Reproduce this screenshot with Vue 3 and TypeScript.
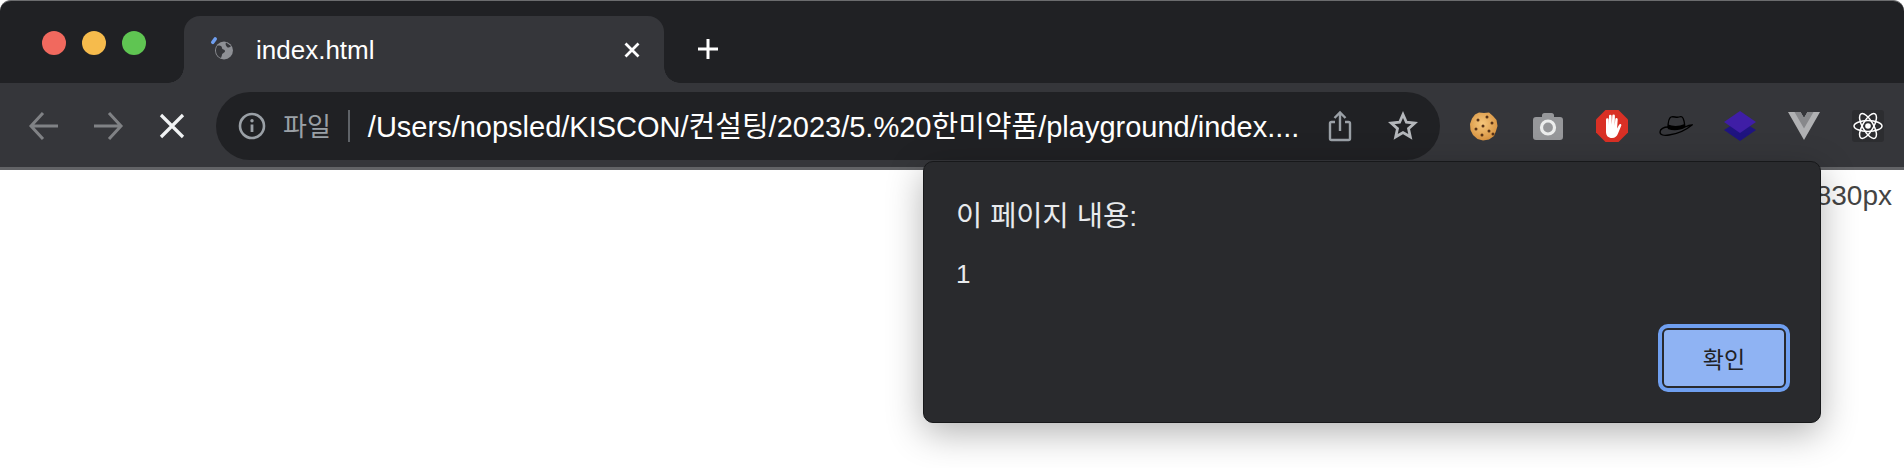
<template>
  <div class="browser">
    <div class="tabstrip">
      <div class="lights">
        <span class="light light--red"></span>
        <span class="light light--yellow"></span>
        <span class="light light--green"></span>
      </div>
      <div class="tab">
        <svg class="tab__favicon" width="28" height="28" viewBox="0 0 28 28">
          <path d="M3.800 7.300 6.200 4" stroke="#6f9ff0" stroke-width="3.600" stroke-linecap="round" fill="none" />
          <circle cx="15" cy="15.500" r="9" fill="#8e9095" />
          <path d="M8 11c3-1 5 0 5 2s3 1 3 3-3 2-3 4l-1 3c-3-1-5-4-5-7 0-2 .4-3.500 1-5ZM17 7.500l5 3.500c-1 1.500-3 2-4 1s-2-3-1-4.500Z" fill="#35363a" />
        </svg>
        <span class="tab__title">index.html</span>
        <svg class="tab__close" width="16" height="16" viewBox="0 0 16 16">
          <path d="M1.500 1.500l13 13M14.500 1.500l-13 13" stroke="#fff" stroke-width="2.800" />
        </svg>
      </div>
      <svg class="new-tab" width="24" height="24" viewBox="0 0 24 24">
        <path d="M12 2v20M2 12h20" stroke="#fff" stroke-width="3" />
      </svg>
    </div>

    <div class="toolbar">
      <div class="nav">
        <svg width="32" height="32" viewBox="0 0 32 32">
          <path d="M30 16H3M15 3 3 16l12 13" fill="none" stroke="#808285" stroke-width="3" />
        </svg>
      </div>
      <div class="nav">
        <svg width="32" height="32" viewBox="0 0 32 32">
          <path d="M2 16h27M17 3l12 13-12 13" fill="none" stroke="#808285" stroke-width="3" />
        </svg>
      </div>
      <div class="nav">
        <svg width="28" height="28" viewBox="0 0 28 28">
          <path d="M3 3l22 22M25 3 3 25" fill="none" stroke="#f1f3f4" stroke-width="3.200" />
        </svg>
      </div>

      <div class="omnibox">
        <svg class="omnibox__info" width="28" height="28" viewBox="0 0 28 28">
          <circle cx="14" cy="14" r="12" fill="none" stroke="#9aa0a6" stroke-width="2.600" />
          <path d="M14 12.500v7.500" stroke="#9aa0a6" stroke-width="2.800" />
          <circle cx="14" cy="8.800" r="1.700" fill="#9aa0a6" />
        </svg>
        <span class="omnibox__scheme">파일</span>
        <span class="omnibox__divider"></span>
        <span class="omnibox__url">/Users/nopsled/KISCON/컨설팅/2023/5.%20한미약품/playground/index....</span>
        <svg class="omnibox__share" width="24" height="32" viewBox="0 0 24 32">
          <path d="M7 12H3.500a1.500 1.500 0 0 0-1.500 1.500v15a1.500 1.500 0 0 0 1.500 1.500h17a1.500 1.500 0 0 0 1.500-1.500v-15a1.500 1.500 0 0 0-1.500-1.500H17M12 21V3M6.500 8 12 2.500 17.500 8" fill="none" stroke="#9aa0a6" stroke-width="2.400" />
        </svg>
        <svg class="omnibox__star" width="30" height="30" viewBox="0 0 30 30">
          <path d="m15 3.500 3.400 7.700 8.400.8-6.300 5.600 1.800 8.200L15 21.500l-7.300 4.300 1.800-8.200L3.200 12l8.400-.8Z" fill="none" stroke="#b4b7bb" stroke-width="2.800" />
        </svg>
      </div>

      <div class="extensions">
        <div class="ext">
          <svg width="30" height="30" viewBox="0 0 30 30">
            <defs>
              <radialGradient id="cookie" cx="0.45" cy="0.4" r="0.65">
                <stop offset="0" stop-color="#f6c77c" />
                <stop offset="1" stop-color="#d58f3c" />
              </radialGradient>
            </defs>
            <path d="M10 1.500 15 2l5-.500 4 3.500 3.500 4 1 6-1.500 5-2 5-5 3.500-6 1-5.500-1.500-4.500-4L1.500 19 1 13l2-5.500L6 3.500Z" fill="url(#cookie)" />
            <circle v-for="chip in cookieChips" :key="chip[0] + '-' + chip[1]" :cx="chip[0]" :cy="chip[1]" r="1.500" fill="#5a3418" />
          </svg>
        </div>
        <div class="ext">
          <svg width="30" height="28" viewBox="0 0 30 28">
            <path d="M9 5V3.500A2.500 2.500 0 0 1 11.500 1h7A2.500 2.500 0 0 1 21 3.500V5h6a3 3 0 0 1 3 3v17a3 3 0 0 1-3 3H3a3 3 0 0 1-3-3V8a3 3 0 0 1 3-3Z" fill="#96979a" />
            <circle cx="15" cy="15.500" r="6.500" fill="none" stroke="#eceded" stroke-width="3.200" />
          </svg>
        </div>
        <div class="ext">
          <svg width="32" height="32" viewBox="0 0 32 32">
            <path d="M9.500 0h13L32 9.500v13L22.500 32h-13L0 22.500v-13Z" fill="#d93025" />
            <path d="M10 15V9.500a1.300 1.300 0 0 1 2.600 0V15l.4-9a1.300 1.300 0 0 1 2.600 0l.2 8.500.5-8.800a1.300 1.300 0 0 1 2.600 0l-.2 10 .6-6.500a1.200 1.200 0 0 1 2.400.2l-.6 9 2-3.700c.8-1.300 2.700-.6 2.200.8l-3.300 8c-1.200 2.800-2.800 4.500-6 4.500-3.800 0-5.900-2.200-6-6Z" fill="#fff" />
          </svg>
        </div>
        <div class="ext">
          <svg width="34" height="22" viewBox="0 0 34 22">
            <path d="M9 13C9 8 10 3 12 2c3-1 5 1 8 0s4 0 5 4l1 6" fill="none" stroke="#000" stroke-width="1.300" />
            <path d="M9 12c-4 0-8 2-8 5s4 4 9 3c8-1 17-5 23-10-3 0-5 1-7 2" fill="none" stroke="#000" stroke-width="1.300" />
            <path d="M9 9.500c5 2 11 2 16.500-.500l.8 3.500c-5 3-12 3.500-17.500 1.500Z" fill="#000" />
          </svg>
        </div>
        <div class="ext">
          <svg width="32" height="30" viewBox="0 0 32 30">
            <path d="M16 9 32 19 16 30 0 19Z" fill="#1f1480" />
            <path d="M16 0 32 11 16 22 0 11Z" fill="#3f1ea6" />
          </svg>
        </div>
        <div class="ext">
          <svg width="32" height="28" viewBox="0 0 32 28">
            <path d="M0 0h12.500L16 6l3.500-6H32L16 28Z" fill="#b0b1b3" />
            <path d="M6.500 0h6L16 6l3.500-6h6L16 16.500Z" fill="#87888b" />
          </svg>
        </div>
        <div class="ext ext--react">
          <svg width="30" height="28" viewBox="-15 -14 30 28">
            <circle r="2.800" fill="#fff" />
            <g fill="none" stroke="#fff" stroke-width="1.500">
              <ellipse rx="14" ry="5.400" />
              <ellipse rx="14" ry="5.400" transform="rotate(60)" />
              <ellipse rx="14" ry="5.400" transform="rotate(120)" />
            </g>
          </svg>
        </div>
      </div>
    </div>

    <div class="page">830px</div>

    <div class="alert" role="dialog" aria-modal="true">
      <p class="alert__title">이 페이지 내용:</p>
      <p class="alert__message">1</p>
      <div class="alert__actions">
        <button type="button" class="alert__ok">확인</button>
      </div>
    </div>
  </div>
</template>

<script setup lang="ts">
const cookieChips: [number, number][] = [
  [9, 9], [18, 6], [23, 12], [14, 15], [7, 18], [20, 20], [13, 24], [24, 23],
]
</script>

<style scoped>
.browser {
  position: relative;
  width: 1904px;
  height: 468px;
  overflow: hidden;
  background: #fff;
  font-family: "Liberation Sans", "Noto Sans CJK KR", sans-serif;
}

.tabstrip {
  display: flex;
  align-items: flex-start;
  height: 83px;
  padding: 15px 0 0 42px;
  box-sizing: border-box;
  background: #202124;
  border-top: 1px solid #6b6c6e;
  border-radius: 11px 11px 0 0;
}

.lights {
  display: flex;
  gap: 16px;
  margin-top: 15px;
}

.light {
  width: 24px;
  height: 24px;
  border-radius: 50%;
}

.light--red { background: #f1695e; }
.light--yellow { background: #f6bb4c; }
.light--green { background: #5fc552; }

.tab {
  position: relative;
  display: flex;
  align-items: center;
  width: 480px;
  height: 67px;
  margin-left: 38px;
  padding: 0 24px 0 26px;
  box-sizing: border-box;
  background: #35363a;
  border-radius: 16px 16px 0 0;
  color: #fff;
}

.tab::before,
.tab::after {
  content: "";
  position: absolute;
  bottom: 0;
  width: 16px;
  height: 16px;
}

.tab::before {
  left: -16px;
  background: radial-gradient(circle at 0 0, #202124 15.500px, #35363a 16px);
}

.tab::after {
  right: -16px;
  background: radial-gradient(circle at 100% 0, #202124 15.500px, #35363a 16px);
}

.tab__favicon {
  margin: -2px 0 0 -1px;
  flex: none;
}

.tab__title {
  margin-left: 19px;
  padding-top: 2px;
  font-size: 26px;
}

.tab__close {
  margin-left: auto;
}

.new-tab {
  margin: 21px 0 0 32px;
}

.toolbar {
  display: flex;
  align-items: flex-start;
  height: 87px;
  padding: 9px 0 0 12px;
  box-sizing: border-box;
  background: #35363a;
  border-bottom: 3px solid #626366;
}

.nav {
  display: flex;
  align-items: center;
  justify-content: center;
  width: 64px;
  height: 68px;
  flex: none;
}

.omnibox {
  display: flex;
  align-items: center;
  width: 1224px;
  height: 68px;
  margin-left: 12px;
  padding: 0 22px 0 22px;
  box-sizing: border-box;
  background: #202124;
  border-radius: 34px;
  color: #fff;
}

.omnibox__info {
  flex: none;
}

.omnibox__scheme {
  margin-left: 17px;
  padding-bottom: 4px;
  font-size: 26px;
  color: #9aa0a6;
}

.omnibox__divider {
  width: 2px;
  height: 32px;
  margin-left: 17px;
  background: #5f6368;
}

.omnibox__url {
  margin-left: 18px;
  padding-bottom: 4px;
  font-size: 29px;
  white-space: nowrap;
}

.omnibox__share {
  margin-left: auto;
  flex: none;
}

.omnibox__star {
  margin-left: 36px;
  flex: none;
}

.extensions {
  display: flex;
  margin-left: 12px;
}

.ext {
  display: flex;
  align-items: center;
  justify-content: center;
  width: 64px;
  height: 68px;
}

.ext--react svg {
  padding: 2px 1px;
  background: #2c2d30;
  border-radius: 3px;
}

.page {
  padding: 10px 12px 0 0;
  font-size: 28px;
  color: #444;
  text-align: right;
}

.alert {
  position: absolute;
  top: 161px;
  left: 923px;
  display: flex;
  flex-direction: column;
  width: 898px;
  height: 262px;
  padding: 36px 30px 30px 32px;
  box-sizing: border-box;
  background: #292a2d;
  border: 1px solid #17181a;
  border-radius: 10px;
  box-shadow: 0 10px 36px rgba(0, 0, 0, 0.3);
  color: #e8eaed;
}

.alert__title {
  margin: 0;
  font-size: 28.500px;
  line-height: 36px;
}

.alert__message {
  margin: 25px 0 0;
  font-size: 26px;
  line-height: 30px;
}

.alert__actions {
  display: flex;
  justify-content: flex-end;
  margin-top: auto;
}

.alert__ok {
  width: 124px;
  height: 60px;
  margin: 4px;
  padding: 0;
  background: #8fb3f3;
  border: 2px solid #292a2d;
  border-radius: 6px;
  outline: 4px solid #6f9ff0;
  outline-offset: 0;
  font: inherit;
  font-size: 23px;
  color: #202124;
}
</style>

<style>
html,
body {
  background: #fff;
}
</style>
